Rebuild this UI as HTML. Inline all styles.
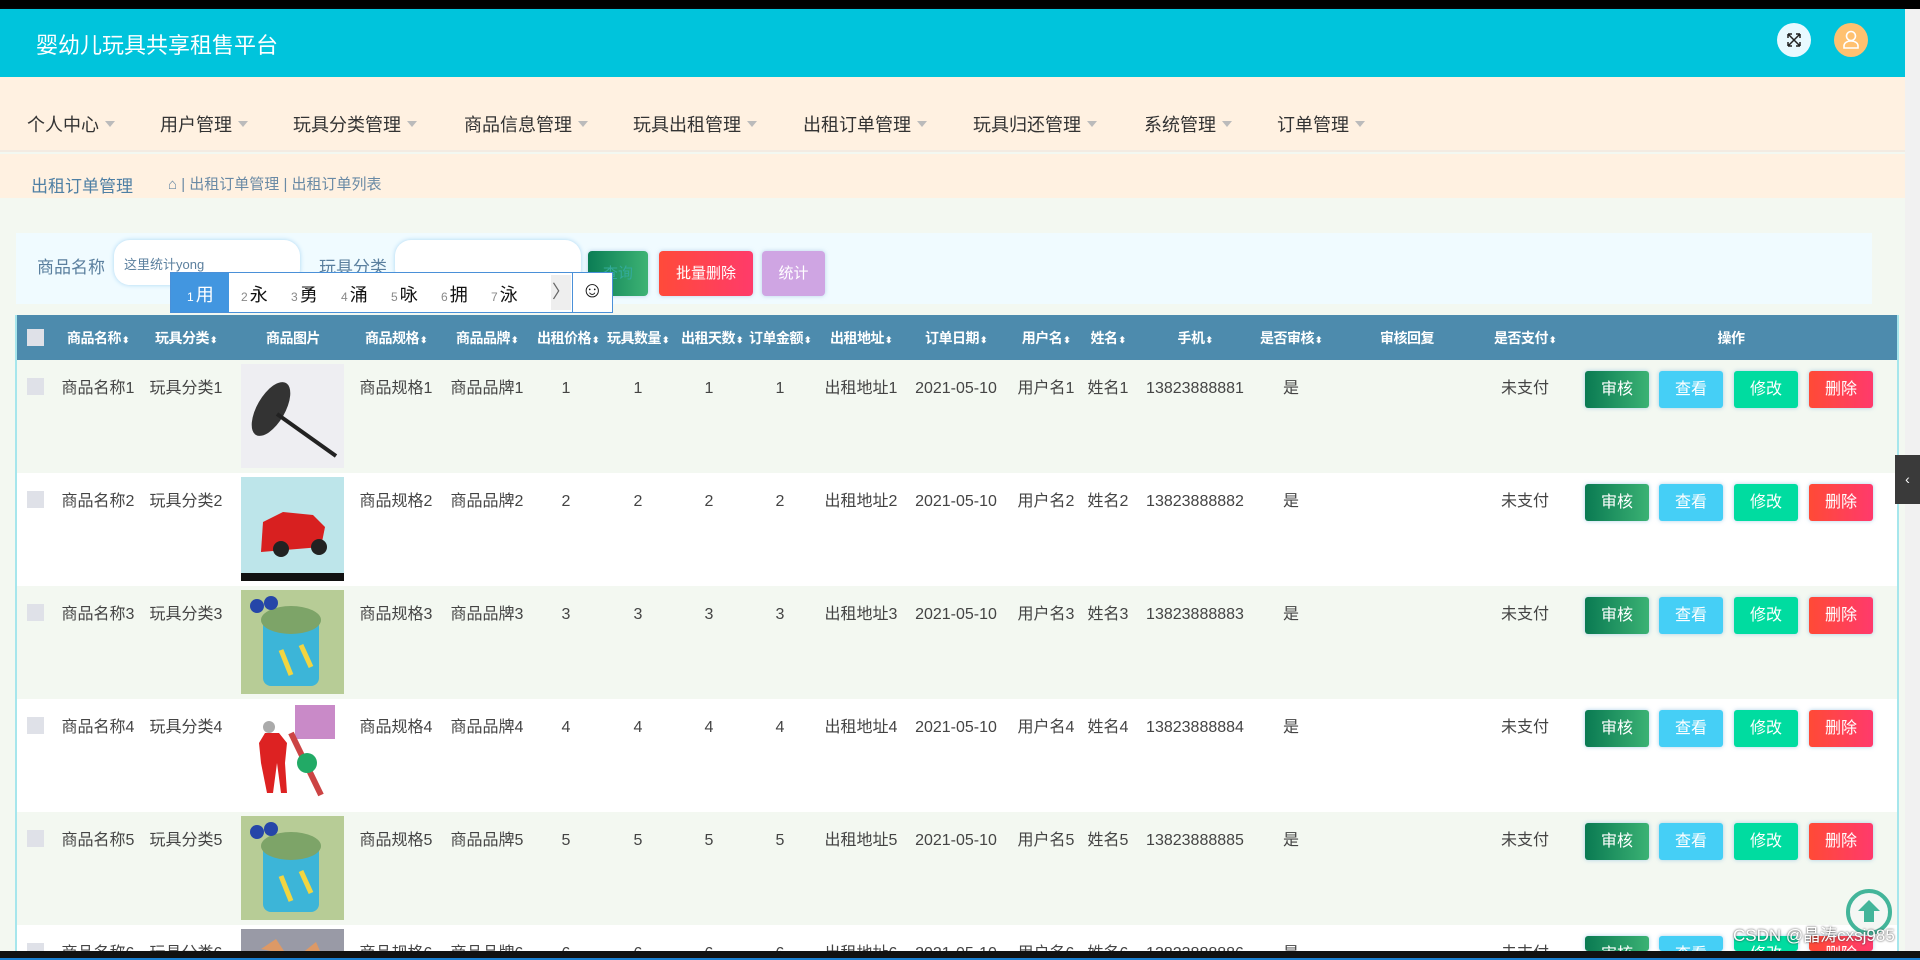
<!DOCTYPE html>
<html><head><meta charset="utf-8">
<style>
*{margin:0;padding:0;box-sizing:border-box}
html{width:1920px;height:960px;overflow:hidden}
body{width:1920px;height:960px;overflow:hidden;background:#f3f8f1;font-family:"Liberation Sans","Noto Sans CJK SC",sans-serif;position:relative;color:#444}
#wrap{position:absolute;left:0;top:0;width:1920px;height:960px;overflow:hidden}
.abs{position:absolute}
#top{left:0;top:0;width:1920px;height:9px;background:#000}
#hdr{left:0;top:9px;width:1905px;height:68px;background:#00c4dc;box-shadow:0 2px 4px rgba(0,150,200,.4)}
#hdr .t{position:absolute;left:36px;top:19px;color:#fff;font-size:22px}
.circ{position:absolute;width:34px;height:34px;border-radius:50%;top:14px}
#nav{left:0;top:77px;width:1905px;height:75px;background:#fff1e1;border-bottom:2px solid #f3ebe2}
.ni{position:absolute;top:34px;font-size:18px;color:#333}
.ni:after{content:"";display:inline-block;margin-left:6px;vertical-align:4px;border:5px solid transparent;border-top:6px solid #bbb;border-bottom:0}
#bc{left:0;top:154px;width:1905px;height:44px;background:#fff1e1}
#sp{left:16px;top:233px;width:1856px;height:71px;background:#f0fbff}
.lab{position:absolute;font-size:17px;color:#5a7f9e}
.inp{position:absolute;top:240px;height:45px;background:#fff;border-radius:16px;box-shadow:0 0 5px #a9d6f3}
.btn{position:absolute;color:#fff;font-size:15px;text-align:center;border-radius:4px;box-shadow:0 0 4px rgba(150,180,220,.6)}
#ime{left:170px;top:272px;width:443px;height:41px;background:#fff;border:1px solid #4a90d8;font-size:18px;color:#111}
#ime span{position:absolute;top:8px}
#ime small{font-size:12px;color:#888;margin-right:2px}
table{position:absolute;left:15px;top:315px;border-collapse:collapse;table-layout:fixed;width:1882px}
th{background:#4d8bad;color:#fff;font-size:14px;height:45px;text-align:center;font-weight:bold;white-space:nowrap;letter-spacing:-0.5px}
.cb{display:inline-block;width:17px;height:17px;background:#dfe1e8}
.sa:after{content:"⬍";font-size:9px;margin-left:1px}
.img{position:absolute;left:241px;width:103px;height:104px;overflow:hidden}
.ob{position:absolute;width:64px;height:37px;line-height:37px;color:#fff;font-size:16px;text-align:center;border-radius:3px;box-shadow:0 0 4px rgba(120,180,220,.6)}
.row{position:absolute;left:15px;width:1882px;height:113px}
.c{position:absolute;font-size:16px;line-height:20px;height:20px;color:#444;white-space:nowrap;transform:translateX(-50%)}
#rows{position:absolute;left:0;top:0;width:1920px;height:951px;overflow:hidden}
</style></head><body><div id="wrap">
<div class="abs" id="top"></div>
<div class="abs" id="hdr"><div class="t">婴幼儿玩具共享租售平台</div>
<div class="circ" style="left:1777px;background:#e8f9ff"><svg width="34" height="34" viewBox="0 0 34 34" fill="none" stroke="#222" stroke-width="1.5"><path d="M11 11l12 12M23 11l-12 12M11 11h4M11 11v4M23 11h-4M23 11v4M11 23h4M11 23v-4M23 23h-4M23 23v-4"/></svg></div>
<div class="circ" style="left:1834px;background:#ffc170"><svg width="34" height="34" viewBox="0 0 34 34" fill="none" stroke="#fff" stroke-width="1.6"><circle cx="17" cy="13" r="4.5"/><path d="M10 25v-2c0-3 3-5 7-5s7 2 7 5v2z"/></svg></div>
</div>
<div class="abs" id="nav">
<div class="ni" style="left:27px">个人中心</div><div class="ni" style="left:160px">用户管理</div><div class="ni" style="left:293px">玩具分类管理</div><div class="ni" style="left:464px">商品信息管理</div><div class="ni" style="left:633px">玩具出租管理</div><div class="ni" style="left:803px">出租订单管理</div><div class="ni" style="left:973px">玩具归还管理</div><div class="ni" style="left:1144px">系统管理</div><div class="ni" style="left:1277px">订单管理</div>
</div>
<div class="abs" id="bc"><div style="position:absolute;left:31px;top:18px;font-size:17px;color:#4e7fa4">出租订单管理</div>
<div style="position:absolute;left:168px;top:19px;font-size:15px;color:#6a8aa5">⌂ | 出租订单管理 | 出租订单列表</div></div>
<div class="abs" id="sp"></div>
<div class="lab" style="left:37px;top:253px">商品名称</div>
<div class="inp" style="left:114px;width:186px"><span style="position:absolute;left:10px;top:14px;font-size:13px;color:#5a7f9e">这里统计yong</span></div>
<div class="lab" style="left:319px;top:253px">玩具分类</div>
<div class="inp" style="left:395px;width:186px"></div>
<div class="btn" style="left:588px;top:251px;width:60px;height:45px;line-height:45px;background:linear-gradient(90deg,#0b7d55,#3db374);color:#3a9">查询</div>
<div class="btn" style="left:659px;top:251px;width:94px;height:45px;line-height:45px;background:linear-gradient(90deg,#ff4a3a,#ff3b6a)">批量删除</div>
<div class="btn" style="left:762px;top:251px;width:63px;height:45px;line-height:45px;background:#cfa5e3">统计</div>
<div class="abs" id="ime"><div style="position:absolute;left:0;top:0;width:58px;height:39px;background:#4296e0"></div>
<span style="left:16px;color:#fff"><small style="color:#fff">1</small>用</span><span style="left:70px"><small>2</small>永</span><span style="left:120px"><small>3</small>勇</span><span style="left:170px"><small>4</small>涌</span><span style="left:220px"><small>5</small>咏</span><span style="left:270px"><small>6</small>拥</span><span style="left:320px"><small>7</small>泳</span>
<div style="position:absolute;left:380px;top:2px;width:20px;height:35px;background:#eee;font-size:18px;color:#666;text-align:center;line-height:35px">〉</div>
<div style="position:absolute;left:401px;top:0;width:1px;height:39px;background:#4a90d8"></div>
<span style="left:410px;font-size:22px;top:4px">☺</span></div>
<table><colgroup><col style="width:40px"><col style="width:86px"><col style="width:90px"><col style="width:124px"><col style="width:82px"><col style="width:100px"><col style="width:58px"><col style="width:86px"><col style="width:56px"><col style="width:86px"><col style="width:76px"><col style="width:114px"><col style="width:66px"><col style="width:58px"><col style="width:116px"><col style="width:76px"><col style="width:156px"><col style="width:80px"><col style="width:332px"></colgroup>
<tr><th><span class="cb" style="vertical-align:middle"></span></th><th class="sa">商品名称</th><th class="sa">玩具分类</th><th>商品图片</th><th class="sa">商品规格</th><th class="sa">商品品牌</th><th class="sa">出租价格</th><th class="sa">玩具数量</th><th class="sa">出租天数</th><th class="sa">订单金额</th><th class="sa">出租地址</th><th class="sa">订单日期</th><th class="sa">用户名</th><th class="sa">姓名</th><th class="sa">手机</th><th class="sa">是否审核</th><th>审核回复</th><th class="sa">是否支付</th><th>操作</th></tr>
</table>
<div id="rows"></div>
<script>
var cols=[[98,"商品名称"],[186,"玩具分类"],[396,"商品规格"],[487,"商品品牌"],[566,""],[638,""],[709,""],[780,""],[861,"出租地址"],[956,"d"],[1046,"用户名"],[1108,"姓名"],[1195,"p"],[1291,"y"],[1525,"n"]];
var imgs=['<svg width="103" height="104"><rect width="103" height="104" fill="#eeeef2"/><ellipse cx="30" cy="45" rx="14" ry="30" fill="#333" transform="rotate(30 30 45)"/><path d="M36 50L95 92" stroke="#222" stroke-width="4"/></svg>',
'<svg width="103" height="104"><rect width="103" height="104" fill="#bde5ea"/><rect y="96" width="103" height="8" fill="#111"/><path d="M22 45l20-10 30 3 12 12-4 20-60 5z" fill="#d82020"/><circle cx="40" cy="72" r="8" fill="#222"/><circle cx="78" cy="70" r="8" fill="#222"/></svg>',
'<svg width="103" height="104"><rect width="103" height="104" fill="#b7cc96"/><rect x="22" y="28" width="56" height="68" rx="8" fill="#3cb5d8"/><ellipse cx="50" cy="30" rx="30" ry="14" fill="#7da468"/><circle cx="16" cy="16" r="7" fill="#2546a8"/><circle cx="30" cy="13" r="7" fill="#2546a8"/><path d="M40 60l10 25M60 55l10 22" stroke="#f2d540" stroke-width="5"/></svg>',
'<svg width="103" height="104"><rect width="103" height="104" fill="#fff"/><rect x="54" y="2" width="40" height="34" fill="#c98ac8"/><path d="M24 30l-6 10 2 20 6 30h6l4-30 4 30h6l-2-30 2-20-8-10z" fill="#d22"/><circle cx="28" cy="24" r="6" fill="#aaa"/><path d="M50 30l30 62" stroke="#c44" stroke-width="6"/><circle cx="66" cy="60" r="10" fill="#2a6"/></svg>'];
imgs.push(imgs[2]);
imgs.push('<svg width="103" height="104"><rect width="103" height="104" fill="#999aa6"/><path d="M20 20l15-10 10 15z" fill="#d96"/><path d="M60 25l15-12 8 18z" fill="#d96"/></svg>');
var h="";
for(var i=0;i<6;i++){var ty=360+i*113;h+='<div class="row" style="top:'+ty+'px;height:'+Math.min(113,951-ty)+'px;background:'+(i%2?'#fff':'#f3f8f1')+'"></div>';
h+='<div class="abs" style="left:27px;top:'+(ty+18)+'px;width:17px;height:17px;background:#dfe1e8"></div>';
h+='<div class="img" style="top:'+(ty+4)+'px;height:'+Math.min(104,947-ty)+'px">'+imgs[i]+'</div>';
var n=i+1;
cols.forEach(function(c){var t=c[1];if(t=="")t=n;else if(t=="d")t="2021-05-10";else if(t=="p")t="1382388888"+n;else if(t=="y")t="是";else if(t=="n")t="未支付";else t=t+n;
h+='<div class="c" style="left:'+c[0]+'px;top:'+(ty+19)+'px">'+t+'</div>';});
var bs=[["审核","linear-gradient(90deg,#0a7a52,#3bb274)",1585],["查看","#45cff6",1659],["修改","#00dca0",1734],["删除","linear-gradient(90deg,#ff4a36,#ff3a6c)",1809]];
bs.forEach(function(b){h+='<div class="ob" style="left:'+b[2]+'px;top:'+(ty+11)+'px;height:'+Math.min(37,951-ty-11)+'px;background:'+b[1]+'">'+b[0]+'</div>';});
}
document.getElementById("rows").innerHTML=h;
</script>
<div class="abs" style="left:15px;top:315px;width:2px;height:636px;background:#a6e6ec"></div>
<div class="abs" style="left:1897px;top:315px;width:2px;height:636px;background:#a6e6ec"></div>
<div class="abs" style="left:1905px;top:9px;width:15px;height:942px;background:#f1f1f1"></div>
<div class="abs" style="left:1895px;top:455px;width:25px;height:49px;background:#3a3a3a;color:#fff;font-size:14px;text-align:center;line-height:49px">‹</div>
<div class="abs" style="left:1846px;top:889px;width:46px;height:46px;border-radius:50%;border:4px solid #43b59a;background:#f4f7f4"><svg width="38" height="38" viewBox="0 0 38 38"><path d="M19 7l11 11h-6v11h-10v-11h-6z" fill="#43b59a"/></svg></div>
<div class="abs" style="left:1733px;top:926px;font-size:17px;line-height:20px;color:#fff;text-shadow:0 0 2px #333">CSDN @晶涛cxsj985</div>
<div class="abs" style="left:0;top:951px;width:1920px;height:9px;background:#111"></div>
<div class="abs" style="left:0;top:958px;width:1920px;height:2px;background:#1a7fd0"></div>
</div></body></html>
